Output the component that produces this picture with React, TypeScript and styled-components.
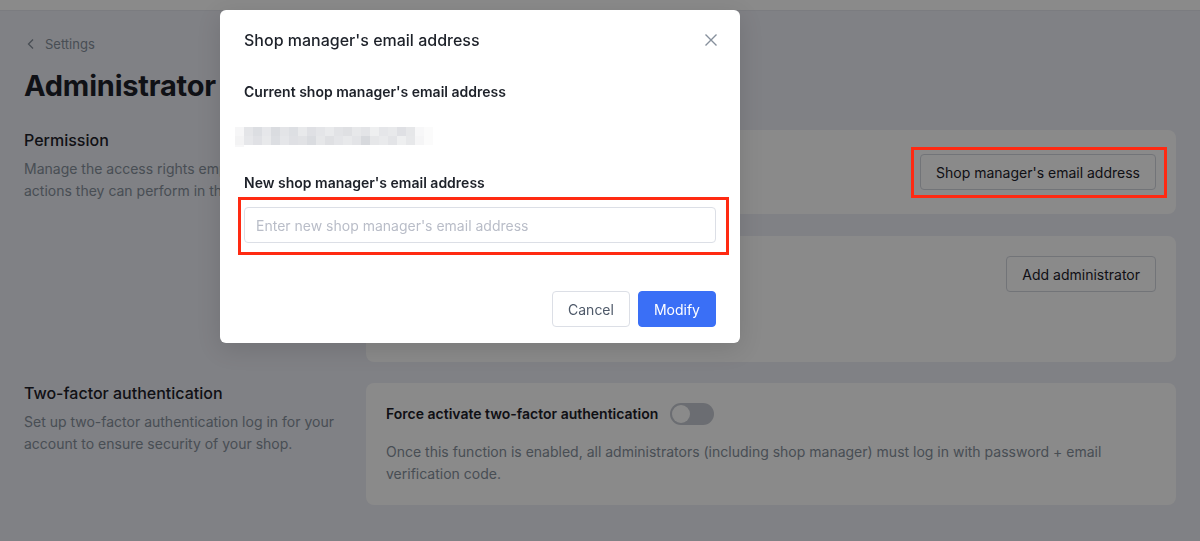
import styled, { createGlobalStyle } from 'styled-components';

const GlobalStyle = createGlobalStyle`
  * { box-sizing: border-box; }
  html, body { margin: 0; padding: 0; }
  body {
    font-family: Inter, "Noto Sans", "Liberation Sans", sans-serif;
    background: #eceef5;
    color: #1d2129;
  }
`;

const Page = styled.div`
  min-height: 100vh;
  background: #eceef5;
`;

const TopBar = styled.div`
  height: 11px;
  background: #ffffff;
  border-bottom: 1px solid #e3e5ec;
`;

const Content = styled.div`
  padding: 23px 24px 36px;
`;

const Breadcrumb = styled.div`
  display: flex;
  align-items: center;
  gap: 9px;
  height: 20px;
  padding-left: 2px;
  color: #86909c;
  font-size: 13px;
`;

const PageTitle = styled.h1`
  margin: 12px 0 24px;
  font-size: 29px;
  line-height: 40px;
  font-weight: 700;
  letter-spacing: -0.2px;
  color: #1d2129;
`;

const Section = styled.section`
  display: grid;
  grid-template-columns: 320px 1fr;
  column-gap: 22px;
  margin-bottom: 21px;
`;

const SectionInfo = styled.div`
  margin-top: -2px;
`;

const SectionTitle = styled.h2`
  margin: 0 0 6px;
  font-size: 16px;
  line-height: 24px;
  font-weight: 500;
  color: #1d2129;
`;

const SectionDesc = styled.p`
  margin: 0;
  font-size: 14px;
  line-height: 22px;
  color: #86909c;
`;

const CardStack = styled.div`
  display: flex;
  flex-direction: column;
  gap: 22px;
`;

const Card = styled.div<{ $height?: number }>`
  background: #ffffff;
  border-radius: 8px;
  padding: 20px;
  min-height: ${({ $height }) => ($height ? `${$height}px` : 'auto')};
`;

const CardActions = styled.div<{ $align?: string }>`
  display: flex;
  align-items: ${({ $align }) => $align || 'center'};
  justify-content: flex-end;
  height: ${({ $align }) => ($align ? 'auto' : '44px')};
`;

const CardLabel = styled.div`
  font-size: 14px;
  line-height: 22px;
  font-weight: 600;
  color: #1d2129;
`;

const OutlineButton = styled.button`
  position: relative;
  height: 36px;
  padding: 0 15px;
  border: 1px solid #d3d6de;
  border-radius: 4px;
  background: #ffffff;
  color: #1d2129;
  font-family: inherit;
  font-size: 14px;
  cursor: pointer;
`;

const ToggleLine = styled.div`
  display: flex;
  align-items: center;
  gap: 12px;
`;

const Switch = styled.span`
  position: relative;
  display: inline-block;
  width: 44px;
  height: 22px;
  border-radius: 11px;
  background: #c6cad2;

  &::after {
    content: '';
    position: absolute;
    top: 2px;
    left: 2px;
    width: 18px;
    height: 18px;
    border-radius: 50%;
    background: #ffffff;
  }
`;

const CardText = styled.p`
  margin: 16px 0 0;
  max-width: 720px;
  font-size: 14px;
  line-height: 22px;
  color: #86909c;
`;

const Highlight = styled.span<{ $inset: string }>`
  position: absolute;
  z-index: 3;
  inset: ${({ $inset }) => $inset};
  border: 3px solid #ff2a12;
  pointer-events: none;
`;

const Overlay = styled.div`
  position: fixed;
  z-index: 1;
  inset: 0;
  background: rgba(0, 0, 0, 0.46);
`;

const Modal = styled.div`
  position: fixed;
  z-index: 2;
  top: 10px;
  left: 220px;
  width: 520px;
  background: #ffffff;
  border-radius: 6px;
  box-shadow: 0 6px 24px rgba(0, 0, 0, 0.12);
`;

const ModalHeader = styled.div`
  height: 60px;
  padding: 0 22px 0 24px;
  display: flex;
  align-items: center;
  justify-content: space-between;
`;

const ModalTitle = styled.div`
  font-size: 16px;
  line-height: 24px;
  font-weight: 500;
  color: #1d2129;
`;

const CloseButton = styled.span`
  display: flex;
  color: #86909c;
  cursor: pointer;
`;

const ModalBody = styled.div`
  padding: 11px 24px 0;
`;

const FieldLabel = styled.div`
  font-size: 14px;
  line-height: 22px;
  font-weight: 600;
  color: #1d2129;
`;

const Mosaic = styled.svg`
  display: block;
  margin: 24px 0 25px -9px;
`;

const InputWrap = styled.div`
  position: relative;
  margin-top: 13px;
`;

const Input = styled.input`
  width: 100%;
  height: 36px;
  padding: 0 11px;
  border: 1px solid #dcdfe6;
  border-radius: 4px;
  font-family: inherit;
  font-size: 14px;
  color: #1d2129;
  outline: none;

  &::placeholder {
    color: #b9bdc8;
  }
`;

const ModalFooter = styled.div`
  display: flex;
  justify-content: flex-end;
  gap: 8px;
  padding: 48px 24px 16px;
`;

const FooterButton = styled.button<{ $primary?: boolean }>`
  height: 36px;
  padding: 0 15px;
  border-radius: 4px;
  border: 1px solid ${({ $primary }) => ($primary ? '#3a6ff6' : '#dcdfe6')};
  background: ${({ $primary }) => ($primary ? '#3a6ff6' : '#ffffff')};
  color: ${({ $primary }) => ($primary ? '#ffffff' : '#4e5969')};
  font-family: inherit;
  font-size: 14px;
  cursor: pointer;
`;

const mosaicRows = [
  ['#f6f6f7', '#e4e5e8', '#dcdee2', '#e6e7ea', '#dadce0', '#e3e4e7', '#dddfe3', '#e8e9eb', '#dfe0e4', '#e4e5e8', '#e9eaec', '#e2e3e6', '#dfe0e3', '#e7e8ea', '#e3e4e7', '#eeeff0', '#e5e6e9', '#e8e9eb', '#dfe0e4', '#e6e7e9', '#f7f7f8', '#fbfbfb'],
  ['#f3f3f4', '#e6e7ea', '#e0e1e5', '#e8e9eb', '#dcdee2', '#e5e6e9', '#dfe0e4', '#e1e2e5', '#dadce0', '#e6e7e9', '#dfe0e3', '#e4e5e8', '#e8e9eb', '#e3e4e7', '#d7d9dd', '#e6e7e9', '#e9eaec', '#e3e4e7', '#eeeff0', '#e7e8ea', '#f5f5f6', '#fbfbfb'],
];

function EmailMosaic() {
  return (
    <Mosaic width="198" height="20" viewBox="0 0 198 20">
      {mosaicRows.map((row, r) =>
        row.map((fill, c) => (
          <rect key={`${r}-${c}`} x={c * 9} y={r * 9} width="9" height="9" fill={fill} />
        ))
      )}
      <rect x="0" y="18" width="9" height="2" fill="#f7f7f8" />
    </Mosaic>
  );
}

export default function App() {
  return (
    <Page>
      <GlobalStyle />
      <TopBar />
      <Content>
        <Breadcrumb>
          <svg width="10" height="12" viewBox="0 0 10 12" fill="none">
            <path d="M7 1.5L2.5 6L7 10.5" stroke="#86909c" strokeWidth="1.3" />
          </svg>
          Settings
        </Breadcrumb>
        <PageTitle>Administrator</PageTitle>

        <Section>
          <SectionInfo>
            <SectionTitle>Permission</SectionTitle>
            <SectionDesc>
              Manage the access rights employees have and actions they can perform in the shop.
            </SectionDesc>
          </SectionInfo>
          <CardStack>
            <Card $height={84}>
              <CardActions>
                <OutlineButton>
                  Shop manager's email address
                  <Highlight $inset="-8px -12px -9px -10px" />
                </OutlineButton>
              </CardActions>
            </Card>
            <Card $height={126}>
              <CardActions $align="flex-start">
                <OutlineButton>Add administrator</OutlineButton>
              </CardActions>
            </Card>
          </CardStack>
        </Section>

        <Section>
          <SectionInfo>
            <SectionTitle>Two-factor authentication</SectionTitle>
            <SectionDesc>
              Set up two-factor authentication log in for your account to ensure security of your shop.
            </SectionDesc>
          </SectionInfo>
          <Card>
            <ToggleLine>
              <CardLabel>Force activate two-factor authentication</CardLabel>
              <Switch />
            </ToggleLine>
            <CardText>
              Once this function is enabled, all administrators (including shop manager) must log in with
              password + email verification code.
            </CardText>
          </Card>
        </Section>
      </Content>

      <Overlay />
      <Modal>
        <ModalHeader>
          <ModalTitle>Shop manager's email address</ModalTitle>
          <CloseButton>
            <svg width="14" height="14" viewBox="0 0 14 14" fill="none">
              <path d="M1.5 1.5L12.5 12.5M12.5 1.5L1.5 12.5" stroke="#86909c" strokeWidth="1.4" />
            </svg>
          </CloseButton>
        </ModalHeader>
        <ModalBody>
          <FieldLabel>Current shop manager's email address</FieldLabel>
          <EmailMosaic />
          <FieldLabel>New shop manager's email address</FieldLabel>
          <InputWrap>
            <Input placeholder="Enter new shop manager's email address" />
            <Highlight $inset="-10px -13px -12px -6px" />
          </InputWrap>
        </ModalBody>
        <ModalFooter>
          <FooterButton>Cancel</FooterButton>
          <FooterButton $primary>Modify</FooterButton>
        </ModalFooter>
      </Modal>
    </Page>
  );
}
